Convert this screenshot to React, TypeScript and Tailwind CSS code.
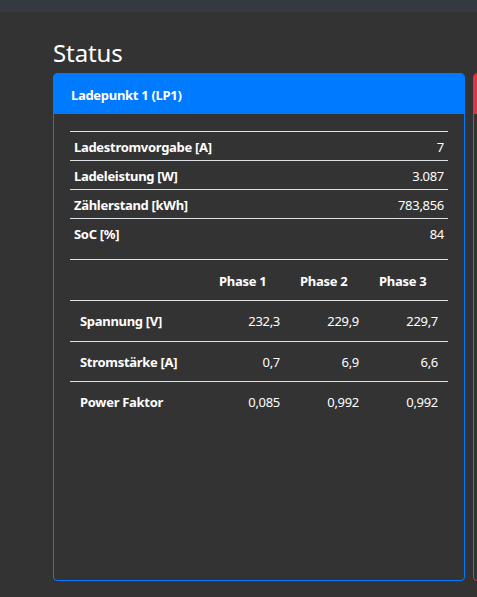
import React from "react";

const rows1 = [
  ["Ladestromvorgabe [A]", "7"],
  ["Ladeleistung [W]", "3.087"],
  ["Zählerstand [kWh]", "783,856"],
  ["SoC [%]", "84"],
];

const rows2 = [
  ["Spannung [V]", "232,3", "229,9", "229,7"],
  ["Stromstärke [A]", "0,7", "6,9", "6,6"],
  ["Power Faktor", "0,085", "0,992", "0,992"],
];

export default function App() {
  return (
    <div className="min-h-[597px] bg-[#333333] text-white font-['Noto_Sans',sans-serif] overflow-hidden">
      <div className="h-[12px] bg-[#343a40]" />
      <div className="pl-[53px] pt-[26px]">
        <h1 className="text-[24px] leading-[30px] mb-[5px] font-normal tracking-[-0.1px]">Status</h1>
        <div className="flex gap-[8px]">
          <div className="w-[412px] h-[508px] shrink-0 border border-[#007bff] rounded-[4px] overflow-hidden">
            <div className="h-[40px] pt-[4px] bg-[#007bff] flex items-center px-[17px] text-[13px] tracking-[-0.3px] font-bold">
              Ladepunkt 1 (LP1)
            </div>
            <div className="px-[16px] pt-[17px]">
              <div className="text-[13px] tracking-[-0.3px]">
                {rows1.map(([l, v], i) => (
                  <div
                    key={i}
                    className="h-[29px] pt-[3px] border-t border-[#dee2e6] flex items-center justify-between px-[4px]"
                  >
                    <span className="font-bold">{l}</span>
                    <span>{v}</span>
                  </div>
                ))}
              </div>
              <div className="mt-[12px] text-[13px] tracking-[-0.3px]">
                <div className="grid grid-cols-[139px_81px_79px_1fr] h-[41px] pt-[4px] border-t border-[#dee2e6] items-center font-bold">
                  <div />
                  <div className="px-[10px]">Phase 1</div>
                  <div className="px-[10px]">Phase 2</div>
                  <div className="px-[10px]">Phase 3</div>
                </div>
                {rows2.map((r, i) => (
                  <div
                    key={i}
                    className={
                      i === 0
                        ? "grid grid-cols-[139px_81px_79px_1fr] h-[41px] pt-[2px] border-t border-[#dee2e6] items-center"
                        : "grid grid-cols-[139px_81px_79px_1fr] h-[40px] pt-[2px] border-t border-[#dee2e6] items-center"
                    }
                  >
                    <div className="px-[10px] font-bold">{r[0]}</div>
                    <div className="px-[10px] text-right">{r[1]}</div>
                    <div className="px-[10px] text-right">{r[2]}</div>
                    <div className="px-[10px] text-right">{r[3]}</div>
                  </div>
                ))}
              </div>
            </div>
          </div>
          <div className="w-[412px] h-[508px] shrink-0 border border-[#dc3545] rounded-[4px] overflow-hidden">
            <div className="h-[40px] bg-[#dc3545]" />
          </div>
        </div>
      </div>
    </div>
  );
}
